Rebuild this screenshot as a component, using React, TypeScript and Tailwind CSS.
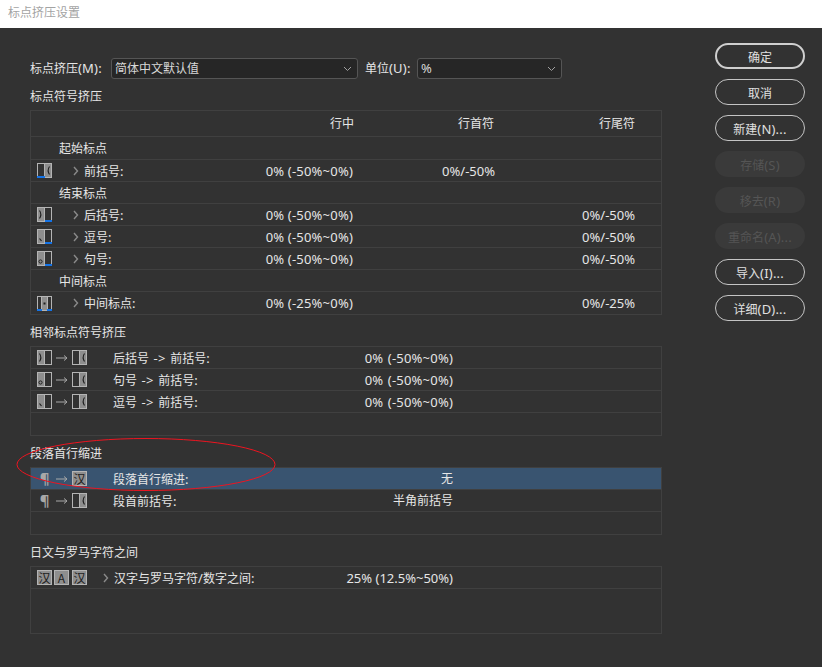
import type { ReactNode } from "react";

type GlyphKind = "open" | "close" | "comma" | "period" | "middle";

// latin runs sit a point larger than the CJK text in this dialog
function Mixed({ text }: { text: string }) {
  const parts = text.split(/([^\u4e00-\u9fff]+)/).filter(Boolean);
  return (
    <span className="whitespace-pre">
      {parts.map((part, i) =>
        /[\u4e00-\u9fff]/.test(part) ? (
          <span key={i}>{part}</span>
        ) : (
          <span key={i} className="text-[13px] tracking-[0.2px] [word-spacing:1px]">
            {part}
          </span>
        ),
      )}
    </span>
  );
}

function Chevron() {
  return (
    <svg width="6" height="10" viewBox="0 0 6 10" className="shrink-0" fill="none" stroke="#8a8a8a" strokeWidth="1.4">
      <path d="M1 1l3.500 4L1 9" />
    </svg>
  );
}

function Arrow() {
  return (
    <svg width="12" height="8" viewBox="0 0 12 8" className="shrink-0" fill="none" stroke="#a8a8a8" strokeWidth="1">
      <path d="M0 4h10.500M8 1.500L11 4 8 6.500" />
    </svg>
  );
}

function CharBox({ char }: { char: string }) {
  return (
    <div className="box-border flex h-[15px] w-[15px] shrink-0 items-center justify-center border border-[#b4b4b4] bg-[#8e8e8e] font-['Noto_Sans_CJK_SC',sans-serif] text-[12px] leading-none text-[#1e1e1e]">
      {char}
    </div>
  );
}

// 15x15 glyph-box used by the compression tables
function GlyphBox({ kind, blue = false }: { kind: GlyphKind; blue?: boolean }) {
  const line = "#b4b4b4";
  const fill = "#8e8e8e";
  const ink = "#1e1e1e";
  const leftFilled = kind === "close" || kind === "comma" || kind === "period";
  return (
    <svg width="15" height="15" viewBox="0 0 15 15" className="shrink-0">
      {kind === "open" && <rect x="8" y="0" width="7" height="15" fill={fill} />}
      {kind === "middle" && <rect x="5" y="0" width="5" height="15" fill={fill} />}
      {leftFilled && <rect x="0" y="0" width="7" height="15" fill={fill} />}
      <rect x="0.5" y="0.5" width="14" height="14" fill="none" stroke={line} />
      {kind === "middle" ? <path d="M4.500 0v15M10.500 0v15" stroke={line} /> : <path d="M7.500 0v15" stroke={line} />}
      {kind === "open" && <path d="M12.500 3.500c-1.600 2.400-1.600 5.600 0 8" fill="none" stroke={ink} strokeWidth="1.100" />}
      {kind === "close" && <path d="M2.500 3.500c1.600 2.400 1.600 5.600 0 8" fill="none" stroke={ink} strokeWidth="1.100" />}
      {kind === "comma" && <path d="M2.500 9.500l2 2.500" fill="none" stroke={ink} strokeWidth="1.200" />}
      {kind === "period" && <circle cx="3.500" cy="10.500" r="1.600" fill="none" stroke={ink} />}
      {kind === "middle" && <rect x="6.500" y="6.500" width="2" height="2" fill={ink} />}
      {blue && kind === "open" && <rect x="0" y="13" width="8" height="2" fill="#1473e6" />}
      {blue && leftFilled && <rect x="8" y="13" width="7" height="2" fill="#1473e6" />}
      {blue && kind === "middle" && (
        <>
          <rect x="0" y="13" width="5" height="2" fill="#1473e6" />
          <rect x="10" y="13" width="5" height="2" fill="#1473e6" />
        </>
      )}
    </svg>
  );
}

function Pilcrow() {
  return <span className="w-[15px] shrink-0 text-center text-[15px] leading-none font-bold text-[#a8a8a8]">¶</span>;
}

function SectionTitle({ children }: { children: string }) {
  return <div className="flex h-[31px] items-end pb-[4px] leading-[18px]">{children}</div>;
}

function Panel({ children }: { children: ReactNode }) {
  return <div className="border border-[#404040]">{children}</div>;
}

function Group({ label, tall = false }: { label: string; tall?: boolean }) {
  return (
    <div className={`box-border flex items-center border-b border-[#404040] pl-[28px] ${tall ? "h-[23px] pt-[2px]" : "h-[22px] pt-[3px]"}`}>
      {label}
    </div>
  );
}

function SpacingRow({ kind, label, mid, start, end, last = false }: { kind: GlyphKind; label: string; mid: string; start?: string; end?: string; last?: boolean }) {
  return (
    <div className={`box-border grid h-[22px] grid-cols-[323px_141px_140px] items-center ${last ? "" : "border-b border-[#404040]"}`}>
      <div className="relative flex items-center">
        <div className="ml-[6px] flex w-[36px] items-center">
          <GlyphBox kind={kind} blue />
        </div>
        <Chevron />
        <span className="ml-[5px] pt-px">
          <Mixed text={label} />
        </span>
        <span className="absolute right-px text-[13px] tracking-[0.2px]">{mid}</span>
      </div>
      <div className="text-right text-[13px]">{start}</div>
      <div className="text-right text-[13px]">{end}</div>
    </div>
  );
}

function PairRow({ left, right, label, value, selected = false }: { left: ReactNode; right: ReactNode; label: string; value: string; selected?: boolean }) {
  return (
    <div className={`box-border flex h-[22px] items-center border-b border-[#404040] ${selected ? "bg-[#395470]" : ""}`}>
      <div className="ml-[6px] flex w-[76px] items-center gap-[4px]">
        {left}
        <Arrow />
        {right}
      </div>
      <span className="pt-px">
        <Mixed text={label} />
      </span>
      <span className="ml-auto mr-[208px] pt-px">
        <Mixed text={value} />
      </span>
    </div>
  );
}

const dialogButtons = [
  { label: "确定", state: "primary", inset: "pt-[3px]" },
  { label: "取消", state: "normal", inset: "pt-[3px]" },
  { label: "新建(N)...", state: "normal", inset: "pt-[2px]" },
  { label: "存储(S)", state: "disabled", inset: "pt-[2px]" },
  { label: "移去(R)", state: "disabled", inset: "pt-[2px]" },
  { label: "重命名(A)...", state: "disabled", inset: "pt-[2px]" },
  { label: "导入(I)...", state: "normal", inset: "pt-[2px]" },
  { label: "详细(D)...", state: "normal", inset: "pt-[2px]" },
];

function DialogButton({ label, state, inset }: { label: string; state: string; inset: string }) {
  if (state === "disabled") {
    return (
      <div className={`flex h-[26px] items-center justify-center rounded-full bg-[#3a3a3a] text-[#555555] ${inset}`}>
        <Mixed text={label} />
      </div>
    );
  }
  return (
    <div className={`box-border flex h-[26px] items-center justify-center rounded-full text-[#e0e0e0] ${inset} ${state === "primary" ? "border-2 border-[#cfcfcf]" : "border border-[#c4c4c4]"}`}>
      <Mixed text={label} />
    </div>
  );
}

function Select({ value, className }: { value: string; className: string }) {
  return (
    <div className={`box-border flex h-[21px] items-center justify-between rounded-[3px] border border-[#555555] bg-[#262626] pl-[3px] pr-[5px] text-[#d8d8d8] ${className}`}>
      <Mixed text={value} />
      <svg width="9" height="6" viewBox="0 0 9 6" fill="none" stroke="#a0a0a0" strokeWidth="1">
        <path d="M1 1l3.500 3.500L8 1" />
      </svg>
    </div>
  );
}

export default function App() {
  return (
    <div className="relative h-[667px] w-[822px] overflow-hidden bg-[#323232] font-['Noto_Sans','Noto_Sans_CJK_SC',sans-serif] text-[12px] leading-[18px] text-[#e6e6e6]">
      <div className="flex h-[28px] items-center bg-white pb-[3px] pl-[8px] text-[#a3a3a3]">标点挤压设置</div>

      <div className="flex">
        <div className="ml-[30px] w-[632px] pt-[30px]">
          <div className="flex h-[21px] items-center">
            <span className="w-[81px]">
              <Mixed text="标点挤压(M):" />
            </span>
            <Select value="简体中文默认值" className="w-[247px]" />
            <span className="ml-[7px] w-[52px]">
              <Mixed text="单位(U):" />
            </span>
            <Select value="%" className="w-[145px]" />
          </div>

          <SectionTitle>标点符号挤压</SectionTitle>
          <Panel>
            <div className="box-border grid h-[26px] grid-cols-[323px_141px_140px] items-center border-b border-[#404040]">
              <div className="text-right">行中</div>
              <div className="pr-px text-right">行首符</div>
              <div className="text-right">行尾符</div>
            </div>
            <Group label="起始标点" tall />
            <SpacingRow kind="open" label="前括号:" mid="0% (-50%~0%)" start="0%/-50%" />
            <Group label="结束标点" />
            <SpacingRow kind="close" label="后括号:" mid="0% (-50%~0%)" end="0%/-50%" />
            <SpacingRow kind="comma" label="逗号:" mid="0% (-50%~0%)" end="0%/-50%" />
            <SpacingRow kind="period" label="句号:" mid="0% (-50%~0%)" end="0%/-50%" />
            <Group label="中间标点" />
            <SpacingRow kind="middle" label="中间标点:" mid="0% (-25%~0%)" end="0%/-25%" last />
          </Panel>

          <SectionTitle>相邻标点符号挤压</SectionTitle>
          <Panel>
            <PairRow left={<GlyphBox kind="close" />} right={<GlyphBox kind="open" />} label="后括号 -> 前括号:" value="0% (-50%~0%)" />
            <PairRow left={<GlyphBox kind="period" />} right={<GlyphBox kind="open" />} label="句号 -> 前括号:" value="0% (-50%~0%)" />
            <PairRow left={<GlyphBox kind="comma" />} right={<GlyphBox kind="open" />} label="逗号 -> 前括号:" value="0% (-50%~0%)" />
            <div className="h-[22px]" />
          </Panel>

          <SectionTitle>段落首行缩进</SectionTitle>
          <Panel>
            <PairRow selected left={<Pilcrow />} right={<CharBox char="汉" />} label="段落首行缩进:" value="无" />
            <PairRow left={<Pilcrow />} right={<GlyphBox kind="open" />} label="段首前括号:" value="半角前括号" />
            <div className="h-[22px]" />
          </Panel>

          <SectionTitle>日文与罗马字符之间</SectionTitle>
          <Panel>
            <div className="box-border flex h-[22px] items-center border-b border-[#404040]">
              <div className="ml-[6px] flex w-[66px] items-center gap-[2px]">
                <CharBox char="汉" />
                <CharBox char="A" />
                <span className="ml-px">
                  <CharBox char="汉" />
                </span>
              </div>
              <Chevron />
              <span className="ml-[5px] pt-px">
                <Mixed text="汉字与罗马字符/数字之间:" />
              </span>
              <span className="ml-auto mr-[208px] text-[13px]">25% (12.5%~50%)</span>
            </div>
            <div className="h-[44px]" />
          </Panel>
        </div>

        <div className="ml-[53px] flex w-[90px] flex-col gap-[10px] pt-[15px]">
          {dialogButtons.map((b) => (
            <DialogButton key={b.label} label={b.label} state={b.state} inset={b.inset} />
          ))}
        </div>
      </div>

      {/* hand-drawn red annotation over the dialog */}
      <svg className="pointer-events-none absolute left-0 top-0" width="822" height="667" fill="none">
        <ellipse cx="146" cy="464.500" rx="129" ry="26" stroke="#ee1420" strokeWidth="1" />
      </svg>
    </div>
  );
}
